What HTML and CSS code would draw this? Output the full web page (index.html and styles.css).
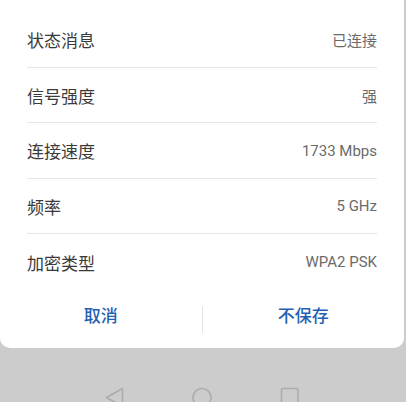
FILE: index.html
```html
<!DOCTYPE html>
<html>
<head>
  <meta charset="utf-8">
  <title>WLAN 详情</title>
  <link rel="stylesheet" href="styles.css">
</head>
<body>
  <div class="dialog">
    <ul class="info-list">
      <li class="info-row"><span class="label">状态消息</span><span class="value">已连接</span></li>
      <li class="info-row"><span class="label">信号强度</span><span class="value">强</span></li>
      <li class="info-row"><span class="label">连接速度</span><span class="value">1733 Mbps</span></li>
      <li class="info-row"><span class="label">频率</span><span class="value">5 GHz</span></li>
      <li class="info-row"><span class="label">加密类型</span><span class="value">WPA2 PSK</span></li>
    </ul>
    <div class="actions">
      <button class="action">取消</button>
      <span class="action-sep"></span>
      <button class="action">不保存</button>
    </div>
  </div>
  <nav class="navbar">
    <svg class="nav-icon" width="20" height="22" viewBox="0 0 20 22">
      <path d="M18.5 1.5 L2.5 10.5 L18.5 19.5 Z" fill="none" stroke="#acacac" stroke-width="1.6" stroke-linejoin="round"/>
    </svg>
    <svg class="nav-icon" width="20" height="22" viewBox="0 0 20 22">
      <circle cx="10" cy="10.5" r="9" fill="none" stroke="#acacac" stroke-width="1.6"/>
    </svg>
    <svg class="nav-icon" width="20" height="22" viewBox="0 0 20 22">
      <rect x="1.5" y="1.5" width="16.5" height="18" rx="1.5" fill="none" stroke="#acacac" stroke-width="1.6"/>
    </svg>
  </nav>
</body>
</html>
```

FILE: styles.css
```css
html, body {
  margin: 0;
  padding: 0;
}
body {
  width: 406px;
  height: 402px;
  overflow: hidden;
  background: #cccccc;
  font-family: Roboto, "Noto Sans CJK SC", sans-serif;
}
.dialog {
  width: 404px;
  background: #ffffff;
  border-radius: 0 0 10px 10px;
  padding-top: 12px;
}
.info-list {
  list-style: none;
  margin: 0;
  padding: 0 27px;
}
.info-row {
  display: flex;
  align-items: center;
  justify-content: space-between;
  height: 56px;
  box-sizing: border-box;
  border-bottom: 1px solid #e6e6e6;
}
.info-row:nth-child(even) {
  height: 55px;
}
.info-row:last-child {
  border-bottom: none;
  height: 56px;
}
.label {
  font-size: 17px;
  color: #3a3a3a;
}
.value {
  font-size: 15px;
  color: #6b6b6b;
}
.actions {
  display: flex;
  align-items: center;
  height: 58px;
}
.action {
  flex: 1;
  height: 100%;
  box-sizing: border-box;
  border: none;
  background: none;
  padding: 0 0 9px;
  font-family: inherit;
  font-size: 17px;
  font-weight: 500;
  color: #1f62b3;
}
.action-sep {
  width: 1px;
  height: 27px;
  background: #e3e3e3;
}
.navbar {
  display: flex;
  justify-content: center;
  gap: 68px;
  padding-top: 39px;
  padding-right: 3px;
}
.nav-icon {
  display: block;
}
```
